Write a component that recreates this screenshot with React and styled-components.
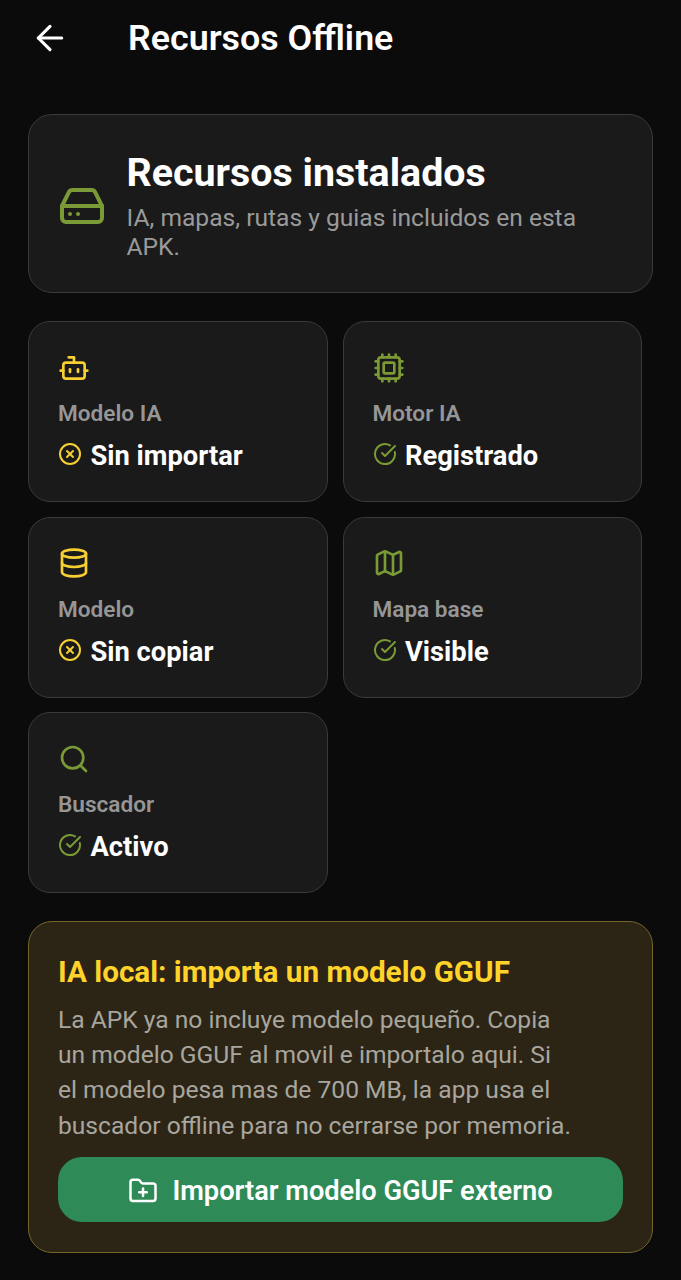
import React from "react";
import styled, { createGlobalStyle } from "styled-components";
import { ArrowLeft, HardDrive, Bot, Cpu, Database, Map as MapIcon, Search, CircleX, CircleCheckBig, FolderPlus } from "lucide-react";

const Global = createGlobalStyle`
  html, body { margin: 0; padding: 0; background: #0b0b0c; }
  * { box-sizing: border-box; }
  body { font-family: Roboto, "Noto Sans", sans-serif; -webkit-font-smoothing: antialiased; }
`;

const Page = styled.div`
  width: 681px;
  height: 1280px;
  overflow: hidden;
  background: #0b0b0c;
  color: #fff;
`;

const Header = styled.header`
  height: 76px;
  display: flex;
  align-items: center;
  padding-left: 30px;
  gap: 58px;
`;

const Title = styled.h1`
  margin: 0;
  font-size: 35.8px;
  font-weight: 600;
  line-height: 40px;
`;

const Content = styled.main`
  padding: 38px 28px 0;
  display: flex;
  flex-direction: column;
  gap: 28px;
`;

const Hero = styled.section`
  height: 179px;
  display: flex;
  align-items: center;
  gap: 20.5px;
  padding: 4px 28px 0 29px;
  background: #1a1a1b;
  border: 1.5px solid #3a3a3b;
  border-radius: 24px;
  color: #7a9a35;
`;

const HeroTitle = styled.h2`
  margin: 0 0 7.5px;
  font-size: 39.4px;
  line-height: 46px;
  font-weight: 700;
  color: #fff;
`;

const HeroText = styled.p`
  margin: 0;
  max-width: 470px;
  font-size: 24.6px;
  line-height: 29px;
  color: #9a9a9a;
`;

const Grid = styled.div`
  display: grid;
  grid-template-columns: 299.5px 299.5px;
  grid-auto-rows: 181px;
  gap: 14.5px 15px;
`;

const Card = styled.article`
  padding: 29.5px 29px 0;
  background: #1a1a1b;
  border: 1.5px solid #3a3a3b;
  border-radius: 22px;
  display: flex;
  flex-direction: column;
  color: ${(p) => p.$tone};
`;

const Label = styled.div`
  margin-top: 16.5px;
  font-size: 22.6px;
  line-height: 28px;
  font-weight: 600;
  color: #969696;
`;

const Status = styled.div`
  margin-top: 11px;
  display: flex;
  align-items: center;
  gap: 8.5px;
  height: 34px;
`;

const StatusGlyph = styled.span`
  display: flex;
  margin-bottom: 4px;
`;

const Value = styled.span`
  font-size: 27.3px;
  line-height: 34px;
  font-weight: 700;
  color: #fff;
`;

const Notice = styled.section`
  height: 332px;
  padding: 30px 29px 0;
  background: #2c2516;
  border: 1.5px solid #75652a;
  border-radius: 24px;
`;

const NoticeTitle = styled.h3`
  margin: 0 0 10px;
  font-size: 29.7px;
  line-height: 40px;
  font-weight: 700;
  color: #ffd32a;
`;

const NoticeText = styled.p`
  margin: 0;
  max-width: 518px;
  font-size: 24.6px;
  line-height: 35.2px;
  color: #a8a69e;
`;

const ImportButton = styled.button`
  margin-top: 14.5px;
  width: 100%;
  height: 65px;
  padding: 2px 0 0;
  display: flex;
  align-items: center;
  justify-content: center;
  gap: 14px;
  border: 0;
  border-radius: 24px;
  background: #2e8b57;
  color: #fff;
  font-family: inherit;
  font-size: 27.2px;
  font-weight: 600;
`;

const YELLOW = "#f6d033";
const GREEN = "#7a9a35";

const items = [
  { icon: Bot, tone: YELLOW, label: "Modelo IA", value: "Sin importar", ok: false },
  { icon: Cpu, tone: GREEN, label: "Motor IA", value: "Registrado", ok: true },
  { icon: Database, tone: YELLOW, label: "Modelo", value: "Sin copiar", ok: false },
  { icon: MapIcon, tone: GREEN, label: "Mapa base", value: "Visible", ok: true },
  { icon: Search, tone: GREEN, label: "Buscador", value: "Activo", ok: true },
];

export default function App() {
  return (
    <Page>
      <Global />
      <Header>
        <ArrowLeft size={40} color="#fff" strokeWidth={1.9} />
        <Title>Recursos Offline</Title>
      </Header>
      <Content>
        <Hero>
          <HardDrive size={48} strokeWidth={2} style={{ flexShrink: 0 }} />
          <div>
            <HeroTitle>Recursos instalados</HeroTitle>
            <HeroText>IA, mapas, rutas y guias incluidos en esta APK.</HeroText>
          </div>
        </Hero>
        <Grid>
          {items.map((it) => {
            const Icon = it.icon;
            const StatusIcon = it.ok ? CircleCheckBig : CircleX;
            return (
              <Card key={it.label} $tone={it.tone}>
                <Icon size={32} strokeWidth={2} />
                <Label>{it.label}</Label>
                <Status>
                  <StatusGlyph>
                    <StatusIcon size={24} strokeWidth={2} />
                  </StatusGlyph>
                  <Value>{it.value}</Value>
                </Status>
              </Card>
            );
          })}
        </Grid>
        <Notice>
          <NoticeTitle>IA local: importa un modelo GGUF</NoticeTitle>
          <NoticeText>
            La APK ya no incluye modelo pequeño. Copia un modelo GGUF al movil e importalo aqui. Si el modelo pesa mas de 700 MB, la app usa el buscador offline para no cerrarse por memoria.
          </NoticeText>
          <ImportButton>
            <FolderPlus size={30} strokeWidth={2} />
            Importar modelo GGUF externo
          </ImportButton>
        </Notice>
      </Content>
    </Page>
  );
}
